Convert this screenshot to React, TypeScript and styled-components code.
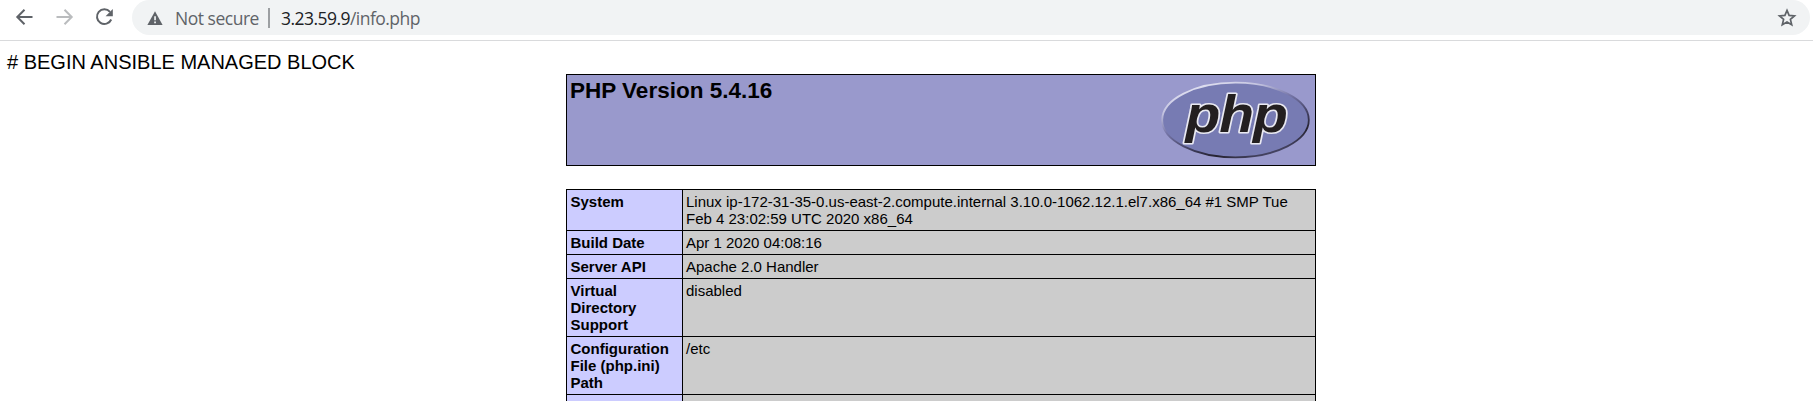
import React from "react";
import styled, { createGlobalStyle } from "styled-components";

const GlobalStyle = createGlobalStyle`
  html, body { margin: 0; background: #fff; overflow: hidden; }
  *, *::before, *::after { box-sizing: border-box; }
`;

const Window = styled.div`
  height: 401px;
  overflow: hidden;
  color: #000;
  font-family: "Liberation Sans", Arial, sans-serif;
`;

const Toolbar = styled.header`
  display: flex;
  height: 41px;
  padding: 0 3px 6px 12px;
  border-bottom: 1px solid #d9dadc;
`;

const NavButtons = styled.nav`
  display: flex;
  align-items: center;
  gap: 16px;
  width: 120px;
`;

const NavIcon = styled.svg<{ $disabled?: boolean }>`
  display: block;
  width: 24px;
  height: 24px;
  flex: none;
  fill: none;
  stroke: ${(p) => (p.$disabled ? "#babcbe" : "#5f6368")};
  stroke-width: 2;
`;

const AddressBar = styled.div`
  display: flex;
  align-items: center;
  flex: 1;
  height: 35px;
  padding: 0 13px 0 15px;
  border-radius: 18px;
  background: #f1f3f4;
  font-family: "Open Sans", "Noto Sans", sans-serif;
  font-size: 17.5px;
  line-height: 34px;
  color: #5f6368;
  white-space: nowrap;
`;

const WarningIcon = styled.svg`
  width: 16px;
  height: 16px;
  margin-top: 1px;
`;

const Security = styled.span`
  margin-left: 12px;
  width: 93px;
  letter-spacing: -0.48px;
`;

const Divider = styled.span`
  width: 2px;
  height: 20px;
  background: #9c9fa2;
`;

const Url = styled.span`
  margin-left: 11px;
  flex: 1;
  letter-spacing: -0.54px;
`;

const Host = styled.span`
  color: #202124;
`;

const StarIcon = styled.svg`
  width: 20px;
  height: 20px;
`;

const Page = styled.main`
  padding: 9px 7px 0;
`;

const Notice = styled.div`
  height: 24px;
  font-size: 20px;
  line-height: 25px;
`;

const Center = styled.div`
  width: 750px;
  margin: 0 auto 0 559px;
`;

const Banner = styled.section`
  display: flex;
  justify-content: space-between;
  height: 92px;
  border: 1px solid #000;
  background: #9999cc;
`;

const Title = styled.h1`
  margin: 3px 0 0 3px;
  font-size: 22.5px;
  line-height: 26px;
`;

const Logo = styled.svg`
  width: 150px;
  height: 84px;
  margin: 3px 4px 0 0;
`;

const LogoText = styled.text`
  font: italic bold 57px "Liberation Sans", Arial, sans-serif;
  letter-spacing: -1px;
  stroke-linejoin: round;
`;

const InfoTable = styled.dl`
  margin: 23px 0 0;
  border: 1px solid #000;
  font-size: 15px;
  line-height: 17px;
`;

const Row = styled.div`
  display: flex;
  min-height: 24px;
  border-bottom: 1px solid #000;
`;

const Name = styled.dt`
  width: 116px;
  padding: 3px 4px 3px 3.5px;
  border-right: 1px solid #000;
  background: #ccccff;
  font-weight: bold;
`;

const Value = styled.dd`
  flex: 1;
  margin: 0;
  padding: 3px 4px 3px 3px;
  background: #cccccc;
`;

const rows: [string, string][] = [
  ["System", "Linux ip-172-31-35-0.us-east-2.compute.internal 3.10.0-1062.12.1.el7.x86_64 #1 SMP Tue Feb 4 23:02:59 UTC 2020 x86_64"],
  ["Build Date", "Apr 1 2020 04:08:16"],
  ["Server API", "Apache 2.0 Handler"],
  ["Virtual Directory Support", "disabled"],
  ["Configuration File (php.ini) Path", "/etc"],
  ["", ""],
];

function PhpLogo() {
  return (
    <Logo viewBox="0 0 150 84" role="img" aria-label="PHP logo">
      <defs>
        <linearGradient id="rim" x1="0.2" y1="0" x2="0.8" y2="1">
          <stop offset="0" stopColor="#e8e8f5" />
          <stop offset="0.22" stopColor="#c2c2df" />
          <stop offset="0.42" stopColor="#7676a8" />
          <stop offset="0.68" stopColor="#3a3856" />
          <stop offset="0.8" stopColor="#25222f" />
          <stop offset="1" stopColor="#55547c" />
        </linearGradient>
      </defs>
      <ellipse cx="74.5" cy="42" rx="73.3" ry="37.3" fill="#777bb3" stroke="url(#rim)" strokeWidth="1.8" />
      <g transform="translate(24.5 53.5) scale(1 0.92)">
        <LogoText
          fill="#231f20"
          stroke="#e9e9f2"
          strokeWidth="3.4"
          paintOrder="stroke"
        >
          php
        </LogoText>
      </g>
    </Logo>
  );
}

export default function App() {
  return (
    <Window>
      <GlobalStyle />
      <Toolbar>
        <NavButtons>
          <NavIcon viewBox="0 0 24 24">
            <path d="M20.5 12H6M12.5 4.8 5.3 12l7.2 7.2" />
          </NavIcon>
          <NavIcon viewBox="0 0 24 24" $disabled>
            <path d="M4.5 12H19M12.5 4.8l7.2 7.2-7.2 7.2" />
          </NavIcon>
          <NavIcon viewBox="0 0 24 24">
            <path d="M18 6.8A7.4 7.4 0 1 0 19.2 14.5" />
            <path d="M20.8 4v7.2h-7.2z" fill="#5f6368" stroke="none" />
          </NavIcon>
        </NavButtons>
        <AddressBar>
          <WarningIcon viewBox="0 0 16 16">
            <path d="M8 1.2 15.6 15H.4z" fill="#5f6368" />
            <path d="M7.2 6.2h1.7v4H7.2zM7.2 11.5h1.7v1.7H7.2z" fill="#f1f3f4" />
          </WarningIcon>
          <Security>Not secure</Security>
          <Divider />
          <Url>
            <Host>3.23.59.9</Host>/info.php
          </Url>
          <StarIcon viewBox="0 0 20 20">
            <path
              d="M10 2.4l2.1 5 5.4.5-4.1 3.5 1.3 5.3-4.7-2.8-4.7 2.8 1.3-5.3L2.5 7.9l5.4-.5z"
              fill="none"
              stroke="#5f6368"
              strokeWidth="1.7"
            />
          </StarIcon>
        </AddressBar>
      </Toolbar>
      <Page>
        <Notice># BEGIN ANSIBLE MANAGED BLOCK</Notice>
        <Center>
          <Banner>
            <Title>PHP Version 5.4.16</Title>
            <PhpLogo />
          </Banner>
          <InfoTable>
            {rows.map(([name, value], i) => (
              <Row key={i}>
                <Name>{name}</Name>
                <Value>{value}</Value>
              </Row>
            ))}
          </InfoTable>
        </Center>
      </Page>
    </Window>
  );
}
